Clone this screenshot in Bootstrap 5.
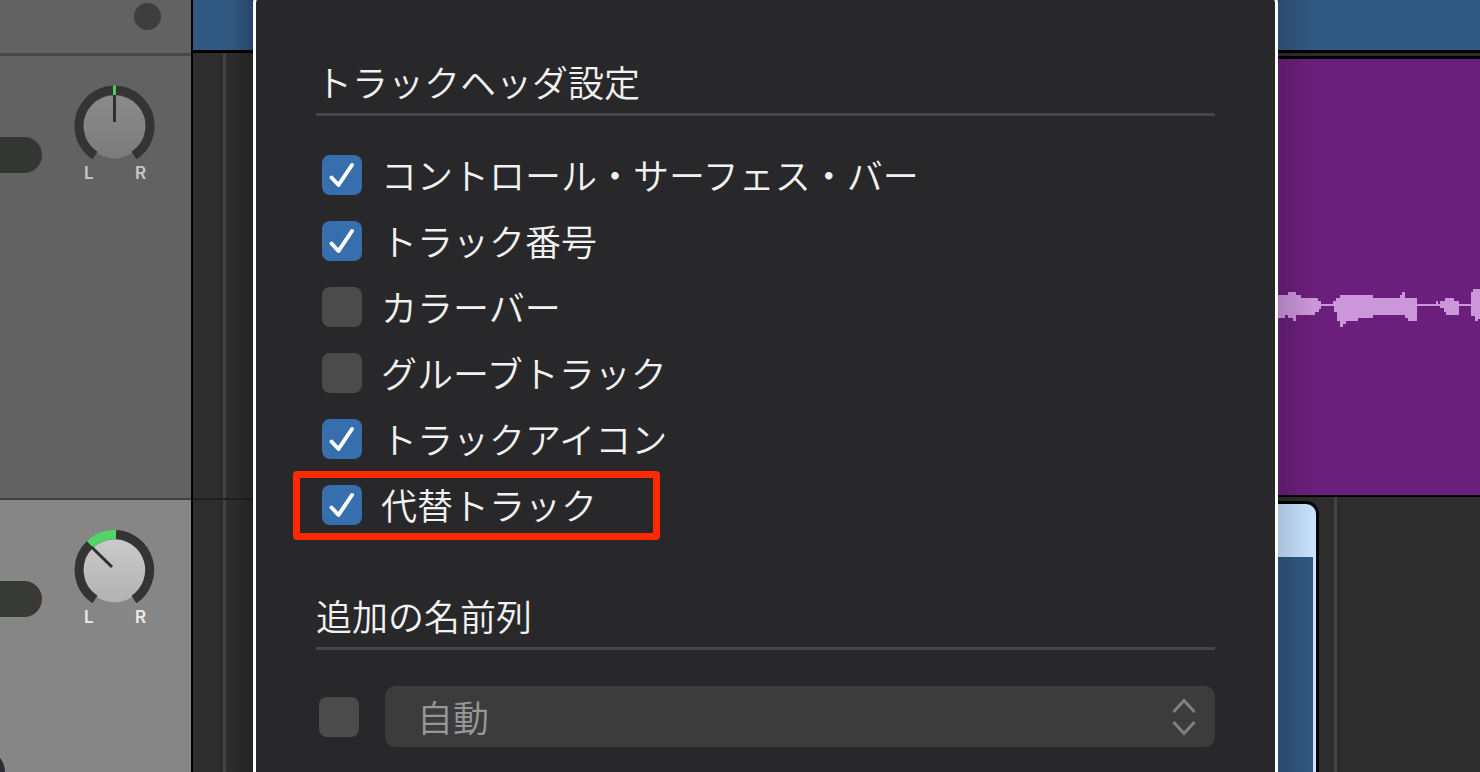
<!DOCTYPE html>
<html lang="ja">
<head>
<meta charset="utf-8">
<meta name="viewport" content="width=device-width, initial-scale=1">
<title>トラックヘッダ設定</title>
<link href="https://cdn.jsdelivr.net/npm/bootstrap@5.3.0/dist/css/bootstrap.min.css" rel="stylesheet">
<style>
  body { background: #2d2d2d; color: #f2f2f2; font-family: "Noto Sans CJK JP", sans-serif; font-size: 36px; font-weight: 350; line-height: 50px; }
  .studio { height: 100vh; min-height: 600px; }

  /* track headers */
  .headers { width: 193px; background: #626262; border-right: 2px solid #000; }
  .header-top { height: 56px; border-bottom: 3px solid #484848; padding: 3px 30px 0 0; }
  .dot { width: 27px; height: 27px; background: #3e3e3e; }
  .track-head { padding-top: 29px; }
  .track-one { height: 444px; border-bottom: 2px solid #414141; }
  .track-two { background: #868686; }
  .pill { width: 42px; height: 36px; margin-top: 52px; background: #343634; border-radius: 0 18px 18px 0; }
  .track-two .pill { background: linear-gradient(90deg, #363b36 50%, #3d3735); }
  .pan { width: 82px; margin-left: 32px; }
  .pan-text { font: 600 17px/18px Inter, sans-serif; color: #c8c8c8; padding: 0 10px; margin-top: -3px; }
  .track-two .pan-text { color: #ececec; }
  .corner-knob { width: 8px; height: 18px; }

  /* arrange area */
  .lane { background: #2d2d2d; }
  .lane-left { width: 60px; }
  .lane-right { width: 202px; }
  .region-blue { height: 53px; background: #315982; border-bottom: 3px solid #000; }
  .lane-right .region-blue { margin-bottom: 3px; }
  .grid-line { background: linear-gradient(90deg, transparent 30px, #444 30px, #444 33px, transparent 33px); }
  .lane-row { height: 447px; border-bottom: 2px solid #202020; }
  .region-purple { height: 441px; background: #6b1f7c; border-top: 3px solid #000; border-bottom: 2px solid #000; }
  .lane-lower { padding-top: 4px; background: linear-gradient(90deg, transparent 56px, #444 56px, #444 59px, transparent 59px); }
  .region-sel { width: 41px; background: #c8e2ff; border: 3px solid #000; border-width: 3px 3px 0 0; border-radius: 0 13px 0 0; padding: 53px 3px 0 0; }
  .region-body { background: #30587f; }
  .shade-l { inset: 0 0 0 auto; width: 24px; background: linear-gradient(270deg, rgba(0,0,0,.22), transparent); }
  .shade-r { inset: 0 auto 0 0; width: 36px; background: linear-gradient(90deg, rgba(0,0,0,.15), transparent); }

  /* settings sheet */
  .sheet { background: #28282a; border: 3px solid #fff; border-bottom: 0; border-radius: 9px 9px 0 0; margin-top: -6px; padding: 59px 60px 0; }
  .group-title { font-size: 36px; font-weight: 350; line-height: 50px; padding-bottom: 7px; border-bottom: 3px solid #464648; margin: 0; }
  .options { margin: 26px 0 52px; }
  .option { height: 66px; gap: 19px; padding-left: 6px; }
  .option label { padding-bottom: 2px; }
  .tick { appearance: none; width: 40px; height: 40px; margin: 0; border-radius: 8px; background: #4b4b4c; flex: none; }
  .tick:checked { background: #366eae url("data:image/svg+xml,%3Csvg xmlns='http://www.w3.org/2000/svg' viewBox='0 0 40 40'%3E%3Cpath d='M9.500 22.500L16.500 30L30 10' fill='none' stroke='%23fff' stroke-width='4' stroke-linecap='round' stroke-linejoin='round'/%3E%3C/svg%3E"); }
  .marker { inset: -1px auto -2px -23px; width: 367px; border: 7px solid #ff2a00; border-radius: 4px; pointer-events: none; }
  .name-row { margin-top: 36px; gap: 26px; padding-left: 3px; }
  .picker { appearance: none; height: 61px; border: 0; border-radius: 10px; padding: 0 80px 2px 32px; color: #979797; opacity: 1; font-weight: 350; line-height: 50px;
    background: #3c3c3c url("data:image/svg+xml,%3Csvg xmlns='http://www.w3.org/2000/svg' width='26' height='40' viewBox='0 0 26 40'%3E%3Cpath d='M2.500 15L13 3.500L23.500 15M2.500 25L13 36.500L23.500 25' fill='none' stroke='%23808080' stroke-width='3'/%3E%3C/svg%3E") no-repeat right 18px center; }
</style>
</head>
<body class="overflow-hidden">
<div class="studio d-flex">
  <aside class="headers d-flex flex-column flex-shrink-0">
    <div class="header-top d-flex justify-content-end"><span class="dot rounded-circle"></span></div>
    <section class="track-head track-one d-flex align-items-start flex-shrink-0">
      <span class="pill"></span>
      <div class="pan">
        <svg class="d-block" width="82" height="82" viewBox="0 0 82 82">
          <defs><linearGradient id="face1" x2="0" y2="1"><stop stop-color="#8b8b8b"/><stop offset="1" stop-color="#7b7b7b"/></linearGradient></defs>
          <circle cx="40.500" cy="42" r="31.500" fill="url(#face1)"/>
          <path d="M21 70.500A35.500 35.500 0 1 1 60 70.500" fill="none" stroke="#343434" stroke-width="9"/>
          <path d="M40.500 10V37" stroke="#303030" stroke-width="3"/>
          <path d="M40.500 0.500V10" stroke="#4fc763" stroke-width="3"/>
        </svg>
        <div class="pan-text d-flex justify-content-between"><span>L</span><span>R</span></div>
      </div>
    </section>
    <section class="track-head track-two d-flex flex-column justify-content-between flex-grow-1">
      <div class="d-flex align-items-start">
        <span class="pill"></span>
        <div class="pan">
          <svg class="d-block" width="82" height="82" viewBox="0 0 82 82">
            <defs><linearGradient id="face2" x2="0" y2="1"><stop stop-color="#cacaca"/><stop offset="1" stop-color="#b2b2b2"/></linearGradient></defs>
            <circle cx="40.500" cy="42" r="31.500" fill="url(#face2)"/>
            <path d="M21 70.500A35.500 35.500 0 0 1 16 15.300" fill="none" stroke="#343434" stroke-width="9"/>
            <path d="M42 5.600A35.500 35.500 0 0 1 60 70.500" fill="none" stroke="#343434" stroke-width="9"/>
            <path d="M16 15.300A35.500 35.500 0 0 1 42 5.600" fill="none" stroke="#50d665" stroke-width="9"/>
            <path d="M17.500 18L38 38" stroke="#303030" stroke-width="3"/>
          </svg>
          <div class="pan-text d-flex justify-content-between"><span>L</span><span>R</span></div>
        </div>
      </div>
      <svg class="corner-knob" viewBox="0 0 8 18"><circle cx="-18" cy="18" r="23" fill="#2b2d33"/></svg>
    </section>
  </aside>

  <div class="lane lane-left position-relative d-flex flex-column flex-shrink-0">
    <div class="region-blue flex-shrink-0"></div>
    <div class="lane-row grid-line flex-shrink-0"></div>
    <div class="grid-line flex-grow-1"></div>
    <div class="shade-l position-absolute"></div>
  </div>

  <main class="sheet flex-grow-1">
    <form>
      <h2 class="group-title">トラックヘッダ設定</h2>
      <div class="options">
        <div class="option d-flex align-items-center"><input class="tick" type="checkbox" id="o1" checked><label for="o1">コントロール・サーフェス・バー</label></div>
        <div class="option d-flex align-items-center"><input class="tick" type="checkbox" id="o2" checked><label for="o2">トラック番号</label></div>
        <div class="option d-flex align-items-center"><input class="tick" type="checkbox" id="o3"><label for="o3">カラーバー</label></div>
        <div class="option d-flex align-items-center"><input class="tick" type="checkbox" id="o4"><label for="o4">グルーブトラック</label></div>
        <div class="option d-flex align-items-center"><input class="tick" type="checkbox" id="o5" checked><label for="o5">トラックアイコン</label></div>
        <div class="option d-flex align-items-center position-relative"><input class="tick" type="checkbox" id="o6" checked><label for="o6">代替トラック</label><span class="marker position-absolute"></span></div>
      </div>
      <h2 class="group-title">追加の名前列</h2>
      <div class="name-row d-flex align-items-center">
        <input class="tick" type="checkbox" id="n1" aria-label="追加の名前列">
        <select class="picker flex-grow-1" aria-label="名前の種類" disabled><option>自動</option></select>
      </div>
    </form>
  </main>

  <div class="lane lane-right position-relative d-flex flex-column flex-shrink-0">
    <div class="region-blue flex-shrink-0"></div>
    <div class="region-purple flex-shrink-0 d-flex align-items-center">
      <svg class="w-100" height="436" viewBox="0 0 202 436" preserveAspectRatio="xMinYMid slice" shape-rendering="crispEdges" fill="#cb96da">
        <path d="M0 236H10V233H18V236H23V239H40V242H43V245H55V242H58V239H62V236H95V239H122V236H124V233H127V239H139V245H158V242H160V245H162V242H167V239H176V242H181V245H193V233H195V230H202V260H200V262H197V257H193V247H181V256H168V253H166V249H162V247H139V262H130V259H127V256H95V259H80V262H68V265H65V268H62V262H59V253H56V247H43V250H41V253H37V256H18V262H15V259H10V256H7V259H0Z"/>
      </svg>
    </div>
    <div class="lane-lower flex-grow-1 d-flex">
      <div class="region-sel d-flex"><div class="region-body flex-grow-1"></div></div>
    </div>
    <div class="shade-r position-absolute"></div>
  </div>
</div>
<script src="https://cdn.jsdelivr.net/npm/bootstrap@5.3.0/dist/js/bootstrap.bundle.min.js"></script>
</body>
</html>
